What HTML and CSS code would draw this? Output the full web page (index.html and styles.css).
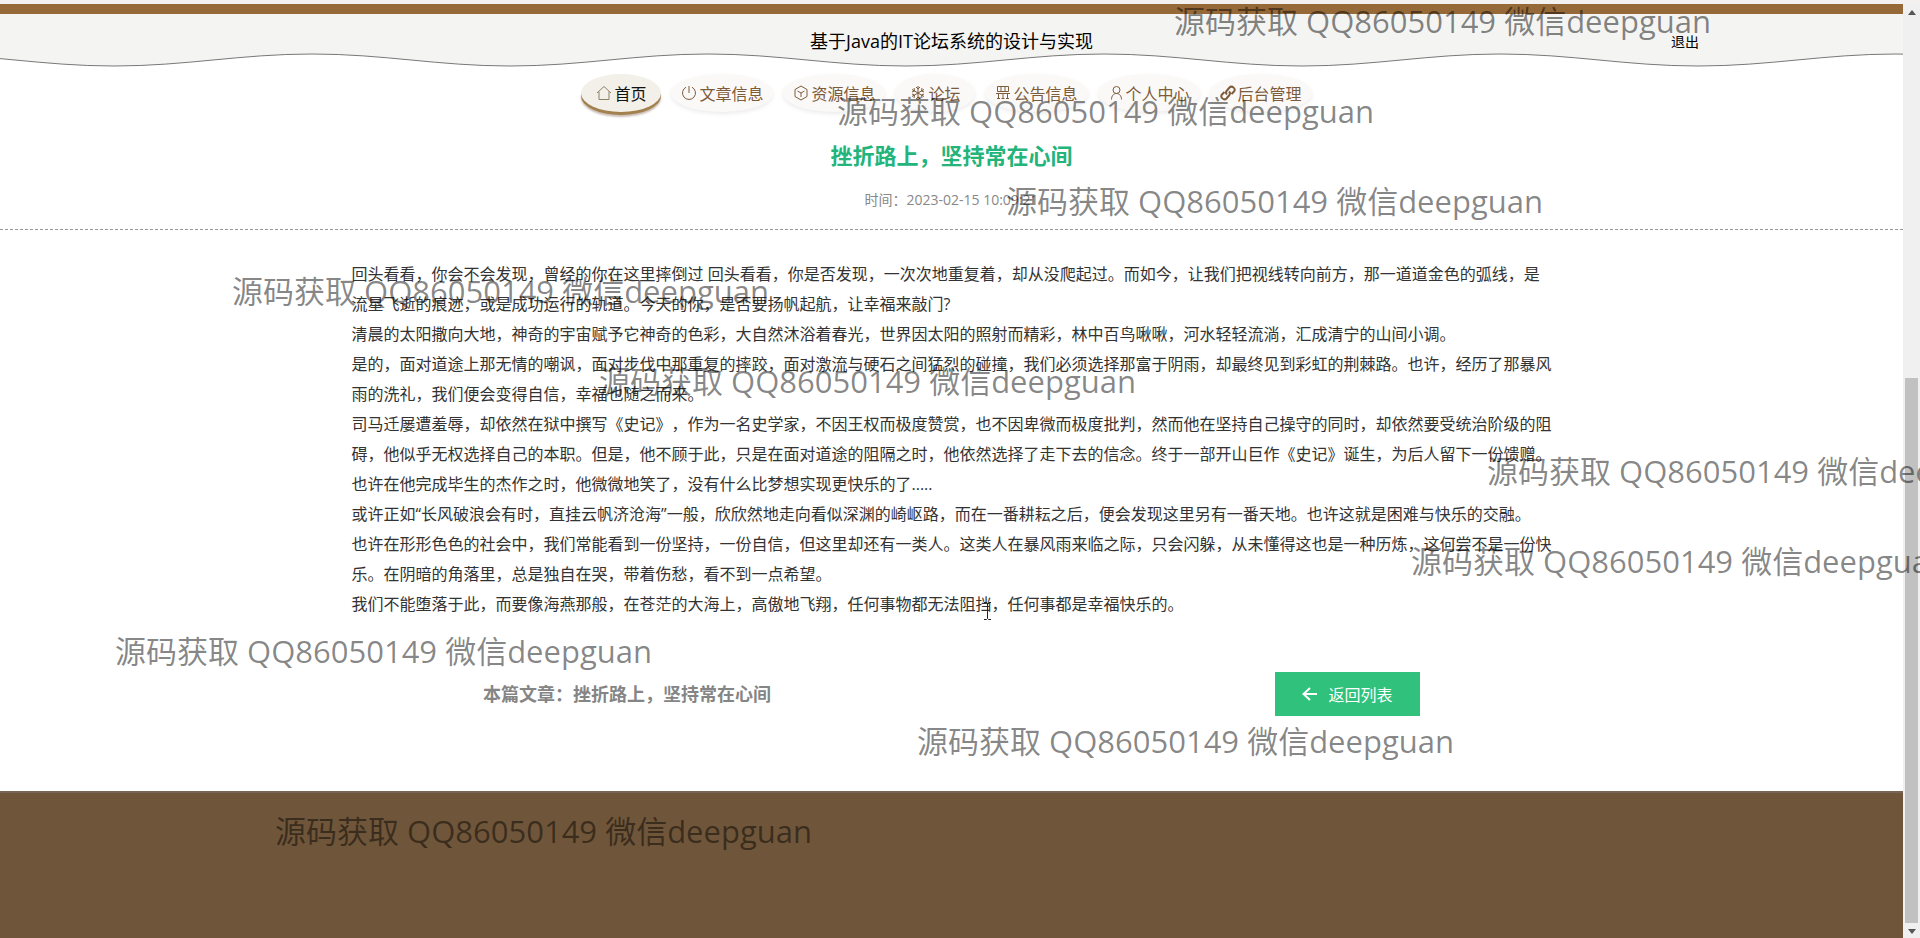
FILE: index.html
```html
<!DOCTYPE html>
<html lang="zh-CN">
<head>
<meta charset="utf-8">
<title>基于Java的IT论坛系统的设计与实现</title>
<link rel="stylesheet" href="styles.css">
</head>
<body>
<div class="window-edge"></div>
<div class="viewport">
  <div class="page">
    <header class="header">
      <svg class="wave" aria-hidden="true">
        <defs>
          <pattern id="wave" x="114" y="0" width="396" height="54" patternUnits="userSpaceOnUse">
            <path d="M0 0V52C72 52 126 40 198 40S324 52 396 52V0Z" fill="#f4f4f2"/>
            <path d="M0 52C72 52 126 40 198 40S324 52 396 52" fill="none" stroke="#777" stroke-width="1"/>
          </pattern>
        </defs>
        <rect width="100%" height="54" fill="url(#wave)"/>
      </svg>
      <h1 class="site-title">基于Java的IT论坛系统的设计与实现</h1>
      <a class="logout" href="#">退出</a>
    </header>

    <nav class="nav">
      <a class="pill active" href="#"><svg class="icon" viewBox="0 0 16 16"><path d="M1 8 8 1.500 15 8M3 6.500V14.500H13V6.500"/></svg>首页</a>
      <a class="pill" href="#"><svg class="icon" viewBox="0 0 16 16"><path d="M8 1V8M5 2.200A6.500 6.500 0 1 0 11 2.200"/></svg>文章信息</a>
      <a class="pill" href="#"><svg class="icon" viewBox="0 0 16 16"><path d="M8 1 14 4.500V11.500L8 15 2 11.500V4.500ZM4.500 6 8 8 11.500 6M8 8V12"/></svg>资源信息</a>
      <a class="pill" href="#"><svg class="icon" viewBox="0 0 16 16"><path d="M8 1V15M2 4.500 14 11.500M14 4.500 2 11.500M6 2 8 4 10 2M6 14 8 12 10 14M2 7 4.500 6 4 3M14 7 11.500 6 12 3M2 9 4.500 10 4 13M14 9 11.500 10 12 13"/></svg>论坛</a>
      <a class="pill" href="#"><svg class="icon" viewBox="0 0 16 16"><path d="M2.500 1.500H13.500V6.500H2.500ZM6 1.500V6.500M10 1.500V6.500M1 8.500H15M3.500 8.500V13.500M12.500 8.500V13.500M8 8.500V13.500M2 13.500H5M6.500 13.500H9.500M11 13.500H14"/></svg>公告信息</a>
      <a class="pill" href="#"><svg class="icon" viewBox="0 0 16 16"><circle cx="8.500" cy="5" r="3.500"/><path d="M3.500 14.500C3.500 11 5.500 8.500 8.500 8.500S13.500 11 13.500 14.500"/></svg>个人中心</a>
      <a class="pill" href="#"><svg class="icon bold" viewBox="0 0 16 16"><path d="M7 9.500C5.500 8 6 6.500 7 5.500L9.500 2.500C12 0 16.500 4 14 6.500L11.500 9M9 6.500C10.500 8 10 9.500 9 10.500L6.500 13.500C4 16 -.5 12 2 9.500L4.500 7"/></svg>后台管理</a>
    </nav>

    <main>
      <div class="heading">
        <h2 class="title">挫折路上，坚持常在心间</h2>
        <p class="date">时间：2023-02-15 10:09:21</p>
      </div>
      <article class="article">
        <p>回头看看，你会不会发现，曾经的你在这里摔倒过 回头看看，你是否发现，一次次地重复着，却从没爬起过。而如今，让我们把视线转向前方，那一道道金色的弧线，是流星飞逝的痕迹，或是成功运行的轨道。今天的你，是否要扬帆起航，让幸福来敲门?</p>
        <p>清晨的太阳撒向大地，神奇的宇宙赋予它神奇的色彩，大自然沐浴着春光，世界因太阳的照射而精彩，林中百鸟啾啾，河水轻轻流淌，汇成清宁的山间小调。</p>
        <p>是的，面对道途上那无情的嘲讽，面对步伐中那重复的摔跤，面对激流与硬石之间猛烈的碰撞，我们必须选择那富于阴雨，却最终见到彩虹的荆棘路。也许，经历了那暴风雨的洗礼，我们便会变得自信，幸福也随之而来。</p>
        <p>司马迁屡遭羞辱，却依然在狱中撰写《史记》，作为一名史学家，不因王权而极度赞赏，也不因卑微而极度批判，然而他在坚持自己操守的同时，却依然要受统治阶级的阻碍，他似乎无权选择自己的本职。但是，他不顾于此，只是在面对道途的阻隔之时，他依然选择了走下去的信念。终于一部开山巨作《史记》诞生，为后人留下一份馈赠。</p>
        <p>也许在他完成毕生的杰作之时，他微微地笑了，没有什么比梦想实现更快乐的了.....</p>
        <p>或许正如“长风破浪会有时，直挂云帆济沧海”一般，欣欣然地走向看似深渊的崎岖路，而在一番耕耘之后，便会发现这里另有一番天地。也许这就是困难与快乐的交融。</p>
        <p>也许在形形色色的社会中，我们常能看到一份坚持，一份自信，但这里却还有一类人。这类人在暴风雨来临之际，只会闪躲，从未懂得这也是一种历炼，这何尝不是一份快乐。在阴暗的角落里，总是独自在哭，带着伤愁，看不到一点希望。</p>
        <p>我们不能堕落于此，而要像海燕那般，在苍茫的大海上，高傲地飞翔，任何事物都无法阻挡，任何事都是幸福快乐的。</p>
      </article>
      <div class="bottom">
        <p class="current">本篇文章：挫折路上，坚持常在心间</p>
        <button class="back" type="button"><svg class="arrow" viewBox="0 0 16 16"><path d="M15 8H1.500M8 2 1.500 8 8 14"/></svg>返回列表</button>
      </div>
    </main>
    <footer class="footer"></footer>
  </div>
  <div class="scrollbar">
    <svg class="tip" viewBox="0 0 8 5"><path d="M0 5 4 0 8 5Z"/></svg>
    <div class="thumb"></div>
    <svg class="tip" viewBox="0 0 8 5"><path d="M0 0 4 5 8 0Z"/></svg>
  </div>
</div>

<svg class="cursor" viewBox="0 0 9 18" aria-hidden="true"><path d="M1 .5H3.500L4.500 1.500 5.500 .5H8M1 17.500H3.500L4.500 16.500 5.500 17.500H8M4.500 1.500V16.500"/></svg>
<div class="marks">
  <span class="mark m1">源码获取 QQ86050149 微信deepguan</span>
  <span class="mark m2">源码获取 QQ86050149 微信deepguan</span>
  <span class="mark m3">源码获取 QQ86050149 微信deepguan</span>
  <span class="mark m4">源码获取 QQ86050149 微信deepguan</span>
  <span class="mark m5">源码获取 QQ86050149 微信deepguan</span>
  <span class="mark m6">源码获取 QQ86050149 微信deepguan</span>
  <span class="mark m7">源码获取 QQ86050149 微信deepguan</span>
  <span class="mark m8">源码获取 QQ86050149 微信deepguan</span>
  <span class="mark m9">源码获取 QQ86050149 微信deepguan</span>
  <span class="mark m10">源码获取 QQ86050149 微信deepguan</span>
</div>
</body>
</html>
```

FILE: styles.css
```css
* { box-sizing: border-box; }

body {
  position: relative;
  display: flex;
  flex-direction: column;
  min-height: 100vh;
  margin: 0;
  overflow: hidden;
  background: #fff;
  color: #333;
  font-family: "Open Sans", "Noto Sans CJK SC", sans-serif;
  font-size: 16px;
  text-spacing-trim: space-all;
}

h1, h2, p { margin: 0; }
a { color: inherit; text-decoration: none; }
svg { display: block; }

.window-edge { height: 4px; background: #f3f1f0; }
.viewport { display: flex; flex: 1; }
.page { display: flex; flex: 1; flex-direction: column; min-width: 0; }

.header {
  position: relative;
  display: grid;
  grid-template-columns: 1fr auto 1fr;
  align-items: center;
  height: 64px;
  border-top: 10px solid #966a38;
  color: #000;
}
.wave { position: absolute; inset: 0; z-index: -1; width: 100%; height: 54px; }
.site-title { grid-column: 2; font-size: 18px; font-weight: 400; line-height: 30px; }
.logout { justify-self: end; margin-right: 204px; font-size: 14px; }

.nav {
  display: flex;
  justify-content: center;
  gap: 10px;
  padding: 6px 10px 0 0;
}
.pill {
  display: flex;
  align-items: center;
  justify-content: center;
  gap: 2px;
  min-width: 80px;
  height: 38px;
  padding: 0 10px;
  border-radius: 50%;
  background: #faf9f8;
  box-shadow: 0 2px 4px #ececee;
  color: #7d5c3c;
}
.active {
  background: #f2f0e8;
  box-shadow: 0 3px 0 #a3814f, 0 5px 2px #c9bcb4;
  color: #111;
}
.icon { width: 16px; height: 16px; fill: none; stroke: currentColor; stroke-width: 1; }
.active .icon { stroke: #8d8169; }
.bold { stroke-width: 2; }

.heading {
  padding: 26px 0 19px;
  border-bottom: 1px dashed #999;
  text-align: center;
}
.title { color: #22b47a; font-size: 22px; font-weight: 700; line-height: 34px; }
.date { margin-top: 18px; color: #888; font-size: 14px; line-height: 20px; }

.article { max-width: 1200px; margin: 29px auto 0; line-height: 30px; }

.bottom {
  display: flex;
  align-items: center;
  justify-content: space-between;
  max-width: 937px;
  margin: 53px auto 75px;
}
.current { color: #858585; font-size: 18px; font-weight: 700; line-height: 30px; }
.back {
  display: flex;
  align-items: center;
  justify-content: center;
  gap: 10px;
  width: 145px;
  height: 44px;
  padding: 0;
  border: 0;
  background: #30c27c;
  color: #fff;
  font: inherit;
}
.arrow { width: 16px; height: 16px; fill: none; stroke: #fff; stroke-width: 2; }

.footer { flex: 1; border-top: 2px solid #776555; background: #6f5539; }

.scrollbar {
  display: flex;
  flex-direction: column;
  align-items: center;
  justify-content: space-between;
  width: 17px;
  padding: 6px 0 4px;
  background: #f0f0f0;
}
.tip { width: 8px; height: 5px; fill: #555; }
.thumb { width: 13px; height: 59%; margin: auto 0 6px; background: #c1c1c1; }

.cursor { position: absolute; top: 602px; left: 983px; width: 9px; height: 18px; fill: none; stroke: #222; }

.marks { position: absolute; inset: 0; overflow: hidden; pointer-events: none; }
.mark {
  position: absolute;
  color: rgba(0, 0, 0, .48);
  font-family: "Open Sans", "Noto Sans CJK SC", sans-serif;
  font-size: 31px;
  line-height: 40px;
  white-space: nowrap;
}
.m1 { top: 1px; left: 1174px; }
.m2 { top: 91px; left: 837px; }
.m3 { top: 181px; left: 1006px; }
.m4 { top: 271px; left: 232px; }
.m5 { top: 361px; left: 599px; }
.m6 { top: 451px; left: 1487px; }
.m7 { top: 541px; left: 1411px; }
.m8 { top: 631px; left: 115px; }
.m9 { top: 721px; left: 917px; }
.m10 { top: 811px; left: 275px; }
```
